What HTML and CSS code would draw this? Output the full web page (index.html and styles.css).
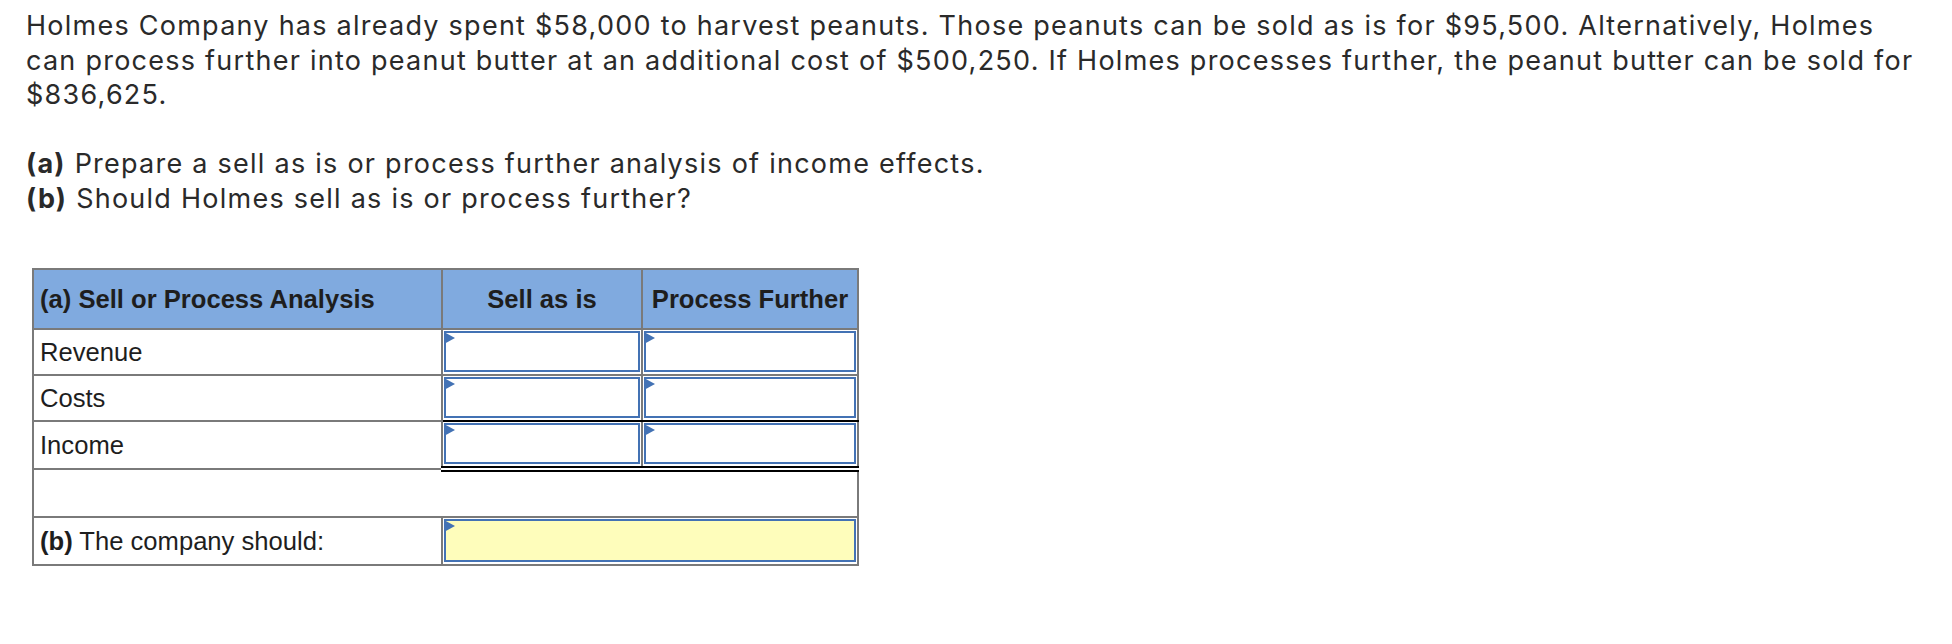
FILE: index.html
```html
<!DOCTYPE html>
<html lang="en">
<head>
<meta charset="utf-8">
<title>Sell or Process Further</title>
<link rel="stylesheet" href="styles.css">
</head>
<body>
<div class="page">
  <p class="intro">Holmes Company has already spent $58,000 to harvest peanuts. Those peanuts can be sold as is for $95,500. Alternatively, Holmes can process further into peanut butter at an additional cost of $500,250. If Holmes processes further, the peanut butter can be sold for $836,625.</p>
  <p class="parts"><b>(a)</b> Prepare a sell as is or process further analysis of income effects.<br><b>(b)</b> Should Holmes sell as is or process further?</p>

  <table class="analysis">
    <colgroup>
      <col class="col-label">
      <col class="col-sell">
      <col class="col-process">
    </colgroup>
    <thead>
      <tr class="head-row">
        <th class="label">(a) Sell or Process Analysis</th>
        <th>Sell as is</th>
        <th>Process Further</th>
      </tr>
    </thead>
    <tbody>
      <tr class="data-row">
        <td class="label">Revenue</td>
        <td class="field"><div class="input"><span class="flag"></span></div></td>
        <td class="field"><div class="input"><span class="flag"></span></div></td>
      </tr>
      <tr class="data-row costs">
        <td class="label">Costs</td>
        <td class="field"><div class="input"><span class="flag"></span></div></td>
        <td class="field"><div class="input"><span class="flag"></span></div></td>
      </tr>
      <tr class="data-row income">
        <td class="label">Income</td>
        <td class="field"><div class="input"><span class="flag"></span></div></td>
        <td class="field"><div class="input"><span class="flag"></span></div></td>
      </tr>
      <tr class="spacer-row">
        <td colspan="3"></td>
      </tr>
      <tr class="answer-row">
        <td class="label"><b>(b)</b> The company should:</td>
        <td class="field" colspan="2"><div class="input select"><span class="flag"></span></div></td>
      </tr>
    </tbody>
  </table>
</div>
</body>
</html>
```

FILE: styles.css
```css
html, body {
  margin: 0;
  padding: 0;
  background: #ffffff;
}

.page {
  padding: 9px 25px 0 26px;
  width: 1901px;
  color: #2a2a2a;
  font-family: "Inter", "Lato", sans-serif;
}

.intro,
.parts {
  margin: 0;
  font-size: 27px;
  line-height: 34.56px;
  letter-spacing: 1.25px;
}

.intro {
  margin-bottom: 34.56px;
}

.parts b {
  font-weight: 700;
}

.analysis {
  margin: 52px 0 0 6px;
  border-collapse: collapse;
  table-layout: fixed;
  width: 825px;
  font-family: "Liberation Sans", Arial, sans-serif;
  font-size: 25.6px;
  color: #1e1e1e;
}

.col-label { width: 409px; }
.col-sell { width: 200px; }
.col-process { width: 216px; }

.analysis th,
.analysis td {
  border: 2px solid #7a7a7a;
  padding: 0;
}

.analysis th {
  background: #80aadf;
  font-weight: 700;
  text-align: center;
  white-space: nowrap;
}

.analysis th.label {
  text-align: left;
}

.analysis .label {
  padding-left: 6px;
}

.head-row { height: 60px; }
.data-row { height: 46px; }
.income { height: 48px; }
.spacer-row { height: 48px; }
.answer-row { height: 48px; }

.analysis td.field {
  padding: 1px 1px 1px 1px;
  vertical-align: top;
}

.costs td.field {
  border-bottom: 2px solid #000000;
}

.income td.field {
  border-bottom: 6px double #000000;
  padding-bottom: 1px;
}

.input {
  position: relative;
  box-sizing: border-box;
  height: 41px;
  border: 2.5px solid #4372b4;
  background: #ffffff;
}

.answer-row .input {
  height: 43px;
}

.input.select {
  background: #fefdbb;
}

.flag {
  position: absolute;
  top: -1px;
  left: -2.5px;
  width: 0;
  height: 0;
  border-left: 11px solid #4372b4;
  border-top: 6px solid transparent;
  border-bottom: 6px solid transparent;
}
```
